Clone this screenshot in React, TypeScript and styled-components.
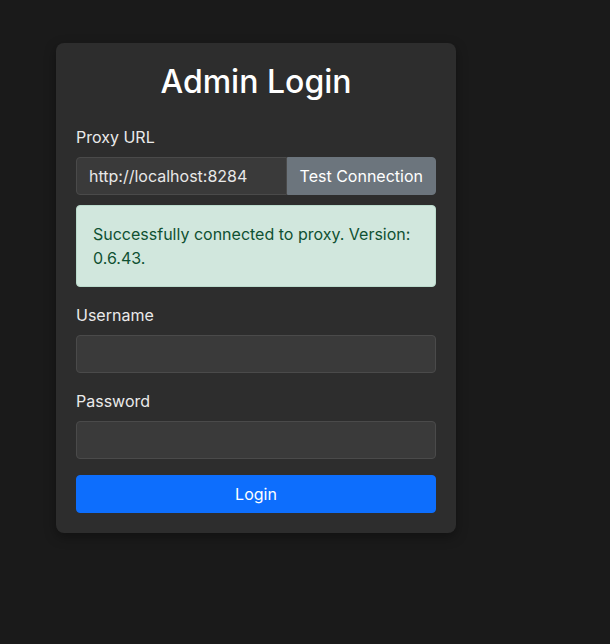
import React from "react";
import styled, { createGlobalStyle } from "styled-components";

const Global = createGlobalStyle`
  html, body { margin: 0; padding: 0; background: #1a1a1a; }
  body { font-family: Inter, "Noto Sans", sans-serif; color: #f0f0f0; }
  * { box-sizing: border-box; }
`;

const Page = styled.div`
  min-height: 644px;
  padding: 43px 0 0 56px;
`;

const Card = styled.div`
  width: 400px;
  background: #2d2d2d;
  border-radius: 8px;
  padding: 20px;
  box-shadow: 0 4px 12px rgba(0, 0, 0, 0.35);
`;

const Title = styled.h1`
  margin: 0 0 24px;
  font-size: 32px;
  line-height: 1.2;
  font-weight: 500;
  text-align: center;
  color: #ffffff;
`;

const Group = styled.div<{ $mb?: number }>`
  margin-bottom: ${(p) => p.$mb ?? 16}px;
`;

const Label = styled.label`
  display: block;
  font-size: 16px;
  line-height: 24px;
  margin-bottom: 8px;
  color: #eaeaea;
`;

const InputRow = styled.div`
  display: flex;
`;

const Input = styled.input<{ $joined?: boolean }>`
  flex: 1;
  min-width: 0;
  width: 100%;
  height: 38px;
  padding: 6px 12px;
  font: inherit;
  font-size: 16px;
  line-height: 24px;
  color: #e8e8e8;
  background: #3a3a3a;
  border: 1px solid #4a4a4a;
  border-radius: ${(p) => (p.$joined ? "4px 0 0 4px" : "4px")};
  outline: none;
`;

const SideButton = styled.button`
  flex: none;
  height: 38px;
  padding: 6px 12px;
  font: inherit;
  font-size: 16px;
  line-height: 24px;
  color: #ffffff;
  background: #6c757d;
  border: 1px solid #6c757d;
  border-radius: 0 4px 4px 0;
`;

const Alert = styled.div`
  margin-top: 10px;
  padding: 16px;
  font-size: 16px;
  line-height: 24px;
  color: #0f5132;
  background: #d1e7dd;
  border: 1px solid #badbcc;
  border-radius: 4px;
`;

const PrimaryButton = styled.button`
  display: block;
  width: 100%;
  height: 38px;
  padding: 6px 12px;
  font: inherit;
  font-size: 16px;
  line-height: 24px;
  color: #ffffff;
  background: #0d6efd;
  border: 1px solid #0d6efd;
  border-radius: 4px;
`;

export default function App() {
  return (
    <Page>
      <Global />
      <Card>
        <Title>Admin Login</Title>
        <Group $mb={0}>
          <Label>Proxy URL</Label>
          <InputRow>
            <Input $joined defaultValue="http://localhost:8284" />
            <SideButton>Test Connection</SideButton>
          </InputRow>
        </Group>
        <Group>
          <Alert>Successfully connected to proxy. Version: 0.6.43.</Alert>
        </Group>
        <Group>
          <Label>Username</Label>
          <Input />
        </Group>
        <Group>
          <Label>Password</Label>
          <Input type="password" />
        </Group>
        <PrimaryButton>Login</PrimaryButton>
      </Card>
    </Page>
  );
}
